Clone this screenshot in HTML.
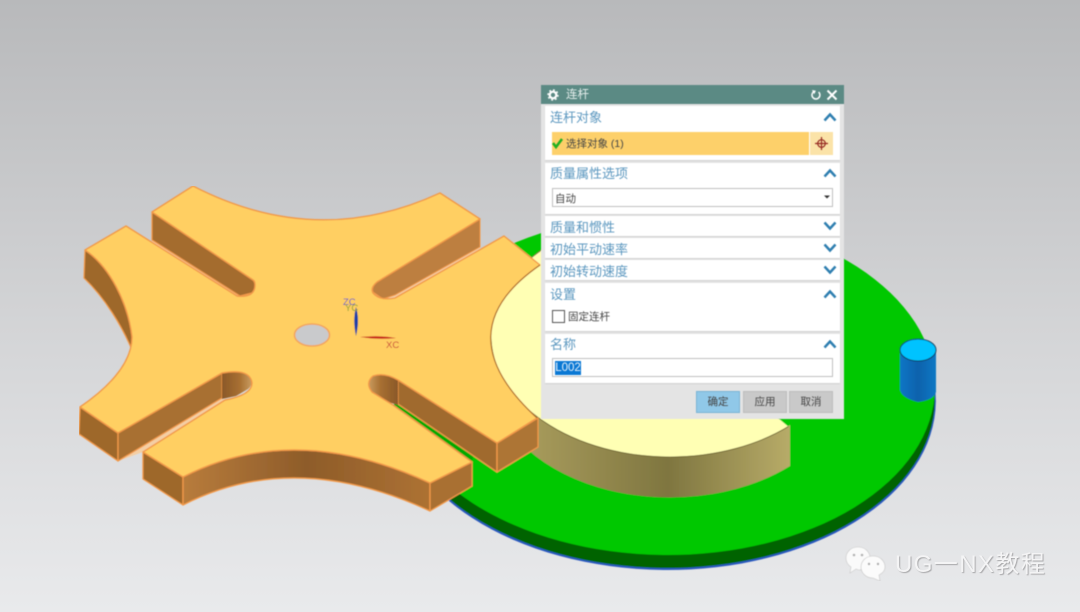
<!DOCTYPE html>
<html><head><meta charset="utf-8">
<style>
html,body{margin:0;padding:0}
body{width:1080px;height:612px;overflow:hidden;position:relative;font-family:"Liberation Sans","Noto Sans CJK SC",sans-serif}
#bg{position:absolute;left:0;top:0}
.a{position:absolute}
#dlg{position:absolute;left:541px;top:85px;width:303px;height:334px;background:#e4e4e4;filter:blur(.4px)}
.sec{position:absolute;left:4px;width:295px;background:#fff;box-shadow:0 1px 1px #d0d0d0}
.h{position:absolute;left:9px;font-size:13px;line-height:16px;color:#5b97bf;white-space:nowrap}
.c{position:absolute;left:282px;width:14px;height:10px}
.t{position:absolute;font-size:10.5px;line-height:14px;color:#444;white-space:nowrap}
.btn{position:absolute;top:306px;height:20px;width:42px;background:#c9c9c9;border:1px solid #bdbdbd;box-sizing:content-box;font-size:10.5px;line-height:20px;text-align:center;color:#444}
</style></head><body>
<svg id="bg" width="1080" height="612" viewBox="0 0 1080 612" xmlns="http://www.w3.org/2000/svg">
<defs>
<filter id="soft" x="0" y="0" width="100%" height="100%"><feGaussianBlur stdDeviation=".4"/></filter>
<linearGradient id="g" x1="0" y1="0" x2="0" y2="1"><stop offset="0" stop-color="#b8b9bb"/><stop offset=".55" stop-color="#d4d5d7"/><stop offset="1" stop-color="#e9eaec"/></linearGradient>
<linearGradient id="ys" gradientUnits="userSpaceOnUse" x1="500" y1="0" x2="790" y2="0"><stop offset="0" stop-color="#b0a362"/><stop offset=".58" stop-color="#7f7640"/><stop offset="1" stop-color="#b7ab68"/></linearGradient>
<linearGradient id="cy" x1="0" y1="0" x2="1" y2="0"><stop offset="0" stop-color="#0f76c6"/><stop offset=".5" stop-color="#0b62ac"/><stop offset="1" stop-color="#1178c4"/></linearGradient>
<linearGradient id="bw" gradientUnits="userSpaceOnUse" x1="183" y1="0" x2="430" y2="0"><stop offset="0" stop-color="#b87c3c"/><stop offset=".5" stop-color="#8e5c2a"/><stop offset="1" stop-color="#ad7233"/></linearGradient>
<linearGradient id="sl" x1="0" y1="0" x2="1" y2="0"><stop offset="0" stop-color="#8a5828"/><stop offset=".6" stop-color="#a87032"/><stop offset="1" stop-color="#c99c60"/></linearGradient>
<linearGradient id="sr" x1="1" y1="0" x2="0" y2="0"><stop offset="0" stop-color="#8a5828"/><stop offset=".6" stop-color="#a87032"/><stop offset="1" stop-color="#c99c60"/></linearGradient>
<clipPath id="yc"><path d="M400,150H700V353L790,428V600H400Z"/></clipPath>
</defs>
<rect width="1080" height="612" fill="url(#g)"/>
<g filter="url(#soft)">
<!-- green disc -->
<g transform="rotate(.6 665 385)">
<ellipse cx="665" cy="399" rx="271" ry="171" fill="#2a58c0"/>
<ellipse cx="665" cy="398" rx="270" ry="170" fill="#006400"/>
<ellipse cx="665" cy="385" rx="270" ry="170" fill="#00c800"/>
</g>
<!-- yellow disc -->
<path d="M491,335A179,122 0 0 0 790,425V466A179,122 0 0 1 491,376Z" fill="url(#ys)"/>
<ellipse cx="670" cy="335" rx="179" ry="122" fill="#ffffb4" stroke="#6b5f2a" stroke-width=".8" clip-path="url(#yc)"/>
<!-- slot floors -->
<path d="M152,238L253,296L237,298L152,244Z" fill="#f4cfa4"/>
<path d="M480,246L383,300L395,298L480,250Z" fill="#f4cfa4"/>
<path d="M118,461L222,398L225,400L143,452Z" fill="#f4cfa4"/>
<path d="M393,405L398,402L473,456L472,462Z" fill="#00a800"/>
<!-- walls -->
<path d="M85,250C110,267 128,303 132,337L132,350C122,326 105,298 84,278Z" fill="#9e682c" stroke="#f2994a" stroke-width="1.2" stroke-linejoin="round"/>
<path d="M152,212L253,280Q258,286 252,293L240,296L152,240Z" fill="#a46c2e" stroke="#f2994a" stroke-width="1.2" stroke-linejoin="round"/>
<path d="M480,219L377,282Q371,287 373,292L383,299L395,295L480,247Z" fill="#bd7f3f" stroke="#f2994a" stroke-width="1"/>
<path d="M80,407L118,433V461L79,434Z" fill="#9e672c" stroke="#f2994a" stroke-width="1.3" stroke-linejoin="round"/>
<path d="M118,433L222,373V398L118,461Z" fill="#a86f31" stroke="#f2994a" stroke-width="1.3" stroke-linejoin="round"/>
<path d="M222,373Q238,368 249,376Q255,383 248,389L236,396L222,399Z" fill="url(#sl)"/>
<path d="M143,452L183,477V505L143,479Z" fill="#9e672c" stroke="#f2994a" stroke-width="1.3" stroke-linejoin="round"/>
<path d="M183,477Q294,420 430,483V511Q294,448 183,505Z" fill="url(#bw)" stroke="#f2994a" stroke-width="1.3" stroke-linejoin="round"/>
<path d="M430,483L472,462V486L430,511Z" fill="#a97032" stroke="#f2994a" stroke-width="1.3" stroke-linejoin="round"/>
<path d="M398,380L497,443V472L398,404Z" fill="#a06a2d" stroke="#f2994a" stroke-width="1.3" stroke-linejoin="round"/>
<path d="M497,443L538,418V447L497,472Z" fill="#ad7435" stroke="#f2994a" stroke-width="1.3" stroke-linejoin="round"/>
<path d="M398,380Q382,371 372,377Q365,384 372,392L388,402L398,405Z" fill="url(#sr)"/>
<!-- top surface -->
<path d="M193,186Q317,250 440,193L480,219L377,282Q370,288 373,293Q380,301 395,298L504,236L540,265Q443,332 537,418L497,443L398,380Q384,372 373,376Q365,383 372,392L393,405L472,462L430,483Q294,420 183,477L143,452L225,400Q252,395 252,383Q250,368 222,373L118,433L80,407C105,390 132,365 132,337C128,303 110,267 85,250L126,226L237,296Q255,298 255,285Q255,281 253,280L152,212Z" fill="#ffcf62" stroke="#f2994a" stroke-width="1.4" stroke-linejoin="round"/>
<path d="M540,265Q443,332 537,418" fill="none" stroke="#9a6b2a" stroke-width=".9"/>
<ellipse cx="312" cy="335" rx="17.5" ry="11" fill="#c9cacc" stroke="#f2a55e" stroke-width="1.6"/>
<!-- triad -->
<path d="M356,307Q360,320 356,336Q352.500,320 356,307Z" fill="#1a3fa8"/>
<path d="M360,337Q380,335 396,338Q378,340 360,337Z" fill="#c8281e"/>
<text x="343" y="305" font-size="9.500" fill="#5a55c0" font-family="Liberation Sans">ZC</text>
<text x="345" y="311" font-size="9.500" fill="#8aa23a" font-family="Liberation Sans">YC</text>
<text x="386" y="348" font-size="9.500" fill="#c8453a" font-family="Liberation Sans">XC</text>
<!-- cylinder -->
<path d="M900,350V390Q902,398 918,402Q934,400 936,392V350Z" fill="url(#cy)"/>
<ellipse cx="918" cy="350" rx="18" ry="11" fill="#00c3ff" stroke="#103a5a" stroke-width="1"/>
<!-- watermark icon -->
<path d="M858,547C851,547 846,552 846,558C846,562 848,565 851,567L850,573L856,569C857,569 858,570 859,570C865,570 870,564 870,558C870,552 865,547 858,547Z" fill="#fafafa" stroke="#c8c8c8" stroke-width=".6"/>
<path d="M873,556C866,556 861,561 861,567C861,573 866,578 873,578L880,581L879,575C883,573 885,570 885,567C885,561 880,556 873,556Z" fill="#fbfbfb" stroke="#c4c4c4" stroke-width=".6"/>
<circle cx="854" cy="555" r="1.300" fill="#b0b0b0"/><circle cx="862" cy="555" r="1.300" fill="#b0b0b0"/>
<circle cx="869" cy="564" r="1.200" fill="#a8a8a8"/><circle cx="878" cy="564" r="1.200" fill="#a8a8a8"/>
</g>
</svg>
<div class="a" style="left:895px;top:549px;font-size:24px;line-height:32px;color:#f4f4f5;text-shadow:1px 1px 1px #a8a8aa;white-space:nowrap;letter-spacing:1.400px;font-family:'Liberation Sans','Noto Sans CJK SC',sans-serif">UG一NX教程</div>

<div id="dlg">
  <div class="a" style="left:0;top:0;width:303px;height:19px;background:#5b8a84"></div>
  <svg class="a" style="left:5px;top:3px" width="14" height="14" viewBox="0 0 14 14"><circle cx="7" cy="7" r="3.300" fill="none" stroke="#fff" stroke-width="2.200"/><circle cx="7" cy="7" r="5" fill="none" stroke="#fff" stroke-width="1.400" stroke-dasharray="1.800 2.100"/></svg>
  <div class="a" style="left:25px;top:2px;font-size:11.500px;line-height:16px;color:#e6efed">连杆</div>
  <svg class="a" style="left:269px;top:4px" width="12" height="12" viewBox="0 0 12 12"><path d="M3.500,2.800A4,4 0 1 0 8.600,3" fill="none" stroke="#fff" stroke-width="1.500"/><path d="M1.500,1.500L5.500,1.200L4.800,5Z" fill="#fff" transform="rotate(15 3.500 3)"/></svg>
  <svg class="a" style="left:285px;top:4px" width="12" height="12" viewBox="0 0 12 12"><path d="M1.500,1.500L10.500,10.500M10.500,1.500L1.500,10.500" stroke="#fff" stroke-width="2"/></svg>

  <div class="sec" style="top:21px;height:54px"></div>
  <div class="h" style="top:25px">连杆对象</div>
  <svg class="c" style="top:27px" viewBox="0 0 14 10"><path d="M1.500,8.500L7,2.500L12.500,8.500" fill="none" stroke="#2f7fb0" stroke-width="2.500"/></svg>
  <div class="a" style="left:11px;top:47px;width:257px;height:23px;background:#fdd06a"></div>
  <svg class="a" style="left:11px;top:52px" width="12" height="12" viewBox="0 0 12 12"><path d="M1,6L4,10L10,2" fill="none" stroke="#22b022" stroke-width="2.600"/></svg>
  <div class="t" style="left:25px;top:52px">选择对象 (1)</div>
  <div class="a" style="left:269px;top:47px;width:23px;height:23px;background:#fbe3a8"></div>
  <svg class="a" style="left:273px;top:51px" width="15" height="15" viewBox="0 0 15 15"><circle cx="7.500" cy="7.500" r="3.800" fill="none" stroke="#962a22" stroke-width="1.200"/><path d="M7.500,1V14M1,7.500H14" stroke="#962a22" stroke-width="1.200"/></svg>

  <div class="sec" style="top:78px;height:51px"></div>
  <div class="h" style="top:81px">质量属性选项</div>
  <svg class="c" style="top:83px" viewBox="0 0 14 10"><path d="M1.500,8.500L7,2.500L12.500,8.500" fill="none" stroke="#2f7fb0" stroke-width="2.500"/></svg>
  <div class="a" style="left:11px;top:103px;width:279px;height:17px;background:#fff;border:1px solid #c0c0c0"></div>
  <div class="t" style="left:14px;top:107px">自动</div>
  <svg class="a" style="left:282px;top:109px" width="8" height="6" viewBox="0 0 8 6"><path d="M1,1.500H7L4,4.500Z" fill="#333"/></svg>

  <div class="sec" style="top:131px;height:20px"></div>
  <div class="h" style="top:135px">质量和惯性</div>
  <svg class="c" style="top:136px" viewBox="0 0 14 10"><path d="M1.500,1.500L7,7.500L12.500,1.500" fill="none" stroke="#2f7fb0" stroke-width="2.500"/></svg>
  <div class="sec" style="top:153px;height:20px"></div>
  <div class="h" style="top:157px">初始平动速率</div>
  <svg class="c" style="top:158px" viewBox="0 0 14 10"><path d="M1.500,1.500L7,7.500L12.500,1.500" fill="none" stroke="#2f7fb0" stroke-width="2.500"/></svg>
  <div class="sec" style="top:175px;height:20px"></div>
  <div class="h" style="top:179px">初始转动速度</div>
  <svg class="c" style="top:180px" viewBox="0 0 14 10"><path d="M1.500,1.500L7,7.500L12.500,1.500" fill="none" stroke="#2f7fb0" stroke-width="2.500"/></svg>

  <div class="sec" style="top:198px;height:48px"></div>
  <div class="h" style="top:202px">设置</div>
  <svg class="c" style="top:204px" viewBox="0 0 14 10"><path d="M1.500,8.500L7,2.500L12.500,8.500" fill="none" stroke="#2f7fb0" stroke-width="2.500"/></svg>
  <div class="a" style="left:11px;top:225px;width:11px;height:11px;border:1px solid #555;background:#fff"></div>
  <div class="t" style="left:27px;top:225px">固定连杆</div>

  <div class="sec" style="top:249px;height:49px"></div>
  <div class="h" style="top:252px">名称</div>
  <svg class="c" style="top:254px" viewBox="0 0 14 10"><path d="M1.500,8.500L7,2.500L12.500,8.500" fill="none" stroke="#2f7fb0" stroke-width="2.500"/></svg>
  <div class="a" style="left:11px;top:273px;width:279px;height:17px;background:#fff;border:1px solid #c0c0c0"></div>
  <div class="a" style="left:14px;top:276px;width:26px;height:14px;background:#0a78d4;color:#e8f2fb;font-size:11.500px;line-height:14px;text-align:center">L002</div>

  <div class="btn" style="left:155px;background:#90c8e8;border-color:#7ab4d6">确定</div>
  <div class="btn" style="left:202px">应用</div>
  <div class="btn" style="left:248px">取消</div>
</div>
</body></html>
